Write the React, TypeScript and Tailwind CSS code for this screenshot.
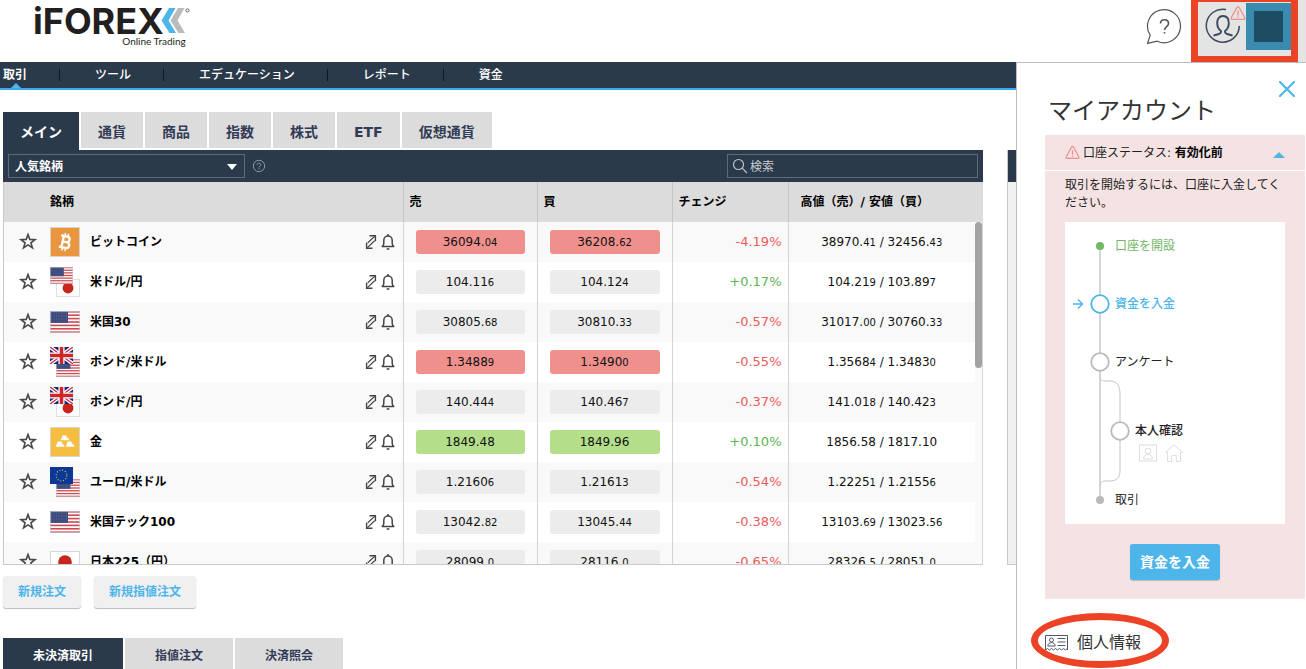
import { Fragment } from "react";
import type { ReactNode } from "react";

type Tone = "down" | "flat" | "up";

type Instrument = {
  name: string;
  icon: ReactNode;
  sell: [string, string];
  buy: [string, string];
  tone: Tone;
  change: string;
  high: [string, string];
  low: [string, string];
};

const toneClass: Record<Tone, string> = {
  down: "bg-[#f0908d]",
  flat: "bg-[#ececec]",
  up: "bg-[#b4de89]",
};

function UsFlag({ className = "" }: { className?: string }) {
  return (
    <svg viewBox="0 0 30 22" preserveAspectRatio="none" className={className}>
      <rect width="30" height="22" fill="#fff" />
      {[0, 1, 2, 3, 4, 5, 6].map((i) => (
        <rect key={i} y={i * 3.4} width="30" height="1.6" fill="#cb4a50" />
      ))}
      <rect width="18" height="12" fill="#3c4a7c" />
      <path
        d="M1 2h16M1 5h16M1 8h16M1 11h16"
        stroke="#6f7ba6"
        strokeWidth="0.8"
        strokeDasharray="1 1.5"
      />
      <rect x="0.5" y="0.5" width="29" height="21" fill="none" stroke="#c9ccd8" strokeOpacity="0.7" />
    </svg>
  );
}

function JpFlag({ className = "" }: { className?: string }) {
  return (
    <svg viewBox="0 0 30 22" className={className}>
      <rect x="0.5" y="0.5" width="29" height="21" fill="#fff" stroke="#d5d7dd" />
      <circle cx="15" cy="11" r="6.8" fill="#c8261c" />
    </svg>
  );
}

function UkFlag({ className = "" }: { className?: string }) {
  return (
    <svg viewBox="0 0 30 22" preserveAspectRatio="none" className={className}>
      <rect width="30" height="22" fill="#16247a" />
      <path d="M0 0l30 22M30 0L0 22" stroke="#fff" strokeWidth="5" />
      <path d="M0 0l30 22M30 0L0 22" stroke="#d0242b" strokeWidth="1.6" />
      <path d="M15 0v22M0 11h30" stroke="#fff" strokeWidth="8" />
      <path d="M15 0v22M0 11h30" stroke="#d0242b" strokeWidth="4.6" />
    </svg>
  );
}

function EuFlag({ className = "" }: { className?: string }) {
  return (
    <svg viewBox="0 0 30 22" preserveAspectRatio="none" className={className}>
      <rect width="30" height="22" fill="#0b3796" />
      <circle
        cx="15"
        cy="11"
        r="7"
        fill="none"
        stroke="#d9c74a"
        strokeWidth="1.4"
        strokeDasharray="1.4 2.265"
      />
    </svg>
  );
}

function PairIcon({ front, back }: { front: ReactNode; back: ReactNode }) {
  return (
    <span className="grid h-[30px] w-[30px]">
      <span className="self-end justify-self-end [grid-area:1/1]">{back}</span>
      <span className="self-start justify-self-start [grid-area:1/1]">{front}</span>
    </span>
  );
}

function BitcoinIcon() {
  return (
    <svg viewBox="0 0 30 30" className="block h-[30px] w-[30px]">
      <rect x="0.5" y="0.5" width="29" height="29" fill="#e9963e" stroke="#dcd3cc" />
      <g fill="none" stroke="#fff" strokeWidth="2.4" transform="rotate(12 15 15)">
        <path d="M10 9.2h6.2a2.7 2.7 0 0 1 0 5.6h-3.8M12.4 14.8h4.4a3 3 0 0 1 0 6H10M12.6 9v12" />
        <path d="M13.6 6v3M16.8 6v3M13.6 21v3M16.8 21v3" strokeWidth="1.5" />
      </g>
    </svg>
  );
}

function GoldIcon() {
  return (
    <svg viewBox="0 0 30 30" className="block h-[30px] w-[30px]">
      <rect x="0.5" y="0.5" width="29" height="29" fill="#f5be41" stroke="#ddd5c4" />
      <g fill="#fff">
        <path d="M12.5 8.5h4l3.2 4.8h-8.9z" />
        <path d="M7.8 14.4h4l3 5.4H5.6z" />
        <path d="M17.6 14.4h4l3.2 5.4h-9z" />
      </g>
      <path d="M16 8.5l1.6 3M11.4 14.5l1.7 3M21.2 14.5l1.8 3" stroke="#f5be41" strokeWidth="0.7" />
    </svg>
  );
}

const usSmall = <UsFlag className="block h-[18px] w-6" />;
const jpSmall = <JpFlag className="block h-[18px] w-6" />;
const ukSmall = <UkFlag className="block h-[17px] w-[23px]" />;
const usLarge = <UsFlag className="block h-[22px] w-[30px]" />;

const instruments: Instrument[] = [
  { name: "ビットコイン", icon: <BitcoinIcon />, sell: ["36094.", "04"], buy: ["36208.", "62"], tone: "down", change: "-4.19%", high: ["38970.", "41"], low: ["32456.", "43"] },
  { name: "米ドル/円", icon: <PairIcon front={<UsFlag className="block h-[17px] w-[23px]" />} back={jpSmall} />, sell: ["104.11", "6"], buy: ["104.12", "4"], tone: "flat", change: "+0.17%", high: ["104.21", "9"], low: ["103.89", "7"] },
  { name: "米国30", icon: usLarge, sell: ["30805.", "68"], buy: ["30810.", "33"], tone: "flat", change: "-0.57%", high: ["31017.", "00"], low: ["30760.", "33"] },
  { name: "ポンド/米ドル", icon: <PairIcon front={ukSmall} back={usSmall} />, sell: ["1.3488", "9"], buy: ["1.3490", "0"], tone: "down", change: "-0.55%", high: ["1.3568", "4"], low: ["1.3483", "0"] },
  { name: "ポンド/円", icon: <PairIcon front={ukSmall} back={jpSmall} />, sell: ["140.44", "4"], buy: ["140.46", "7"], tone: "flat", change: "-0.37%", high: ["141.01", "8"], low: ["140.42", "3"] },
  { name: "金", icon: <GoldIcon />, sell: ["1849.48", ""], buy: ["1849.96", ""], tone: "up", change: "+0.10%", high: ["1856.58", ""], low: ["1817.10", ""] },
  { name: "ユーロ/米ドル", icon: <PairIcon front={<EuFlag className="block h-[17px] w-[23px]" />} back={usSmall} />, sell: ["1.2160", "6"], buy: ["1.2161", "3"], tone: "flat", change: "-0.54%", high: ["1.2225", "1"], low: ["1.2155", "6"] },
  { name: "米国テック100", icon: usLarge, sell: ["13042.", "82"], buy: ["13045.", "44"], tone: "flat", change: "-0.38%", high: ["13103.", "69"], low: ["13023.", "56"] },
  { name: "日本225（円）", icon: <JpFlag className="block h-[22px] w-[30px]" />, sell: ["28099.", "0"], buy: ["28116.", "0"], tone: "flat", change: "-0.65%", high: ["28326.", "5"], low: ["28051.", "0"] },
];

const navItems = ["取引", "ツール", "エデュケーション", "レポート", "資金"];
const categories = ["メイン", "通貨", "商品", "指数", "株式", "ETF", "仮想通貨"];
const positionTabs = ["未決済取引", "指値注文", "決済照会"];

function Price({ value }: { value: [string, string] }) {
  return (
    <>
      {value[0]}
      <span className="text-[10px]">{value[1]}</span>
    </>
  );
}

function StarIcon() {
  return (
    <svg viewBox="0 0 20 20" className="block h-5 w-5" fill="none" stroke="#4a4a4a" strokeWidth="1.6">
      <path d="M10 2.6l1.8 4.8 5.2.2-4.1 3.200 1.500 5.100L10 12.900l-4.400 3 1.500-5.100L3 7.600l5.200-.2z" />
    </svg>
  );
}

function ExpandIcon() {
  return (
    <svg viewBox="0 0 12 16" className="block h-4 w-3" fill="none" stroke="#444" strokeWidth="1.4">
      <path d="M4.500 1.700h5.900v5.500M1.600 8.600v5.700h5.800" />
      <path d="M9.600 2.400L2.800 8.800M9.600 6.800L2.400 13.600" strokeWidth="1.200" />
    </svg>
  );
}

function BellIcon() {
  return (
    <svg viewBox="0 0 14 18" className="block h-[18px] w-3.5" fill="none" stroke="#444" strokeWidth="1.5">
      <path d="M.8 13.6c1.6-.8 2-1.600 2-3.200V7.200a4.200 4.200 0 0 1 8.400 0v3.200c0 1.600.4 2.400 2 3.200z" />
      <path d="M7 1v2M5.600 15.900h2.800" />
    </svg>
  );
}

function WarningIcon({ className = "" }: { className?: string }) {
  return (
    <svg viewBox="0 0 16 16" className={className} fill="none" stroke="#f08d8a" strokeWidth="1.3" strokeLinejoin="round">
      <path d="M7 2.2a1.1 1.1 0 0 1 2 0l5.8 10.6a1 1 0 0 1-.9 1.5H2.1a1 1 0 0 1-.9-1.5z" />
      <path d="M8 5.500v5M8 11.500v1.300" />
    </svg>
  );
}

function Logo() {
  return (
    <a href="#" className="mt-[3px] ml-[33px] flex flex-col text-[#231f20]">
      <span className="flex">
        <span className="font-[Inter,sans-serif] text-[36px] leading-9 font-bold">iFOREX</span>
        <svg viewBox="0 0 30 36" className="-ml-1 h-9 w-[30px]">
          <path d="M9 5h6.500L8.500 17.500 16 30H9.500L1.500 17.500z" fill="#4db5ea" />
          <path d="M18 5h6.500l-7 12.500L25 30h-6.500l-8-12.500z" fill="#b9bbbd" />
          <circle cx="27.500" cy="7.500" r="1.600" fill="none" stroke="#555" strokeWidth="0.9" />
        </svg>
      </span>
      <span className="-mt-1 pr-1 text-right font-[Lato,sans-serif] text-[10px] leading-3">
        Online Trading
      </span>
    </a>
  );
}

function Header() {
  return (
    <header className="flex h-[62px] items-start justify-between">
      <Logo />
      <div className="flex h-full">
        <button type="button" aria-label="ヘルプ" className="mt-2 mr-2 self-start">
          <svg viewBox="0 0 38 38" className="block h-[38px] w-[38px]" fill="none" stroke="#555" strokeWidth="1.2">
            <path d="M5.200 27.200A16.500 16.500 0 1 1 12.200 33.200L2.600 35.400z" />
            <path d="M15.500 15.500c0-5 8-5 8 0 0 3.200-4 3-4 6.500M19.500 24v1.600" strokeWidth="1.600" />
          </svg>
        </button>
        <div className="h-[63px] bg-[#e4e4e4] pr-2">
          <button
            type="button"
            aria-label="マイアカウント"
            className="flex h-[63px] w-[107px] justify-end border-7 border-t-2 border-[#ec4326]"
          >
            <span className="relative flex-1">
              <svg viewBox="0 0 40 40" className="absolute top-1 left-1 h-10 w-10" fill="none" stroke="#3b4a5c" strokeWidth="1.5">
                <path d="M24 3.500A16.500 16.500 0 1 0 37.300 20" />
                <path d="M11.500 29.500c6-1.200 8-2.200 7.500-4.500-2.600-1.800-3.800-4.800-3.800-8 0-4.200 2.200-7 5.800-7s5.800 2.800 5.800 7c0 3.200-1.200 6.200-3.800 8-.5 2.300 1.500 3.300 7.500 4.500" strokeWidth="1.900" />
              </svg>
              <WarningIcon className="absolute top-[3px] right-0 h-4 w-4" />
            </span>
            <span className="mt-px h-[47px] w-[45px] border-8 border-[#3a8bb0] bg-[#1d4c63]" />
          </button>
        </div>
      </div>
    </header>
  );
}

function NavBar() {
  return (
    <nav className="flex h-7 items-center border-b-2 border-[#3fa9e8] bg-[#2b3a4a] pl-[3px] text-xs text-white">
      {navItems.map((item, i) => (
        <Fragment key={item}>
          {i > 0 && <span className="mr-[35px] ml-8 h-3 w-px bg-[#10161d]" />}
          <a
            href="#"
            className={i === 0 ? "relative pt-px leading-[25px] font-bold" : "pt-px leading-[25px] font-medium"}
          >
            {item}
            {i === 0 && (
              <svg viewBox="0 0 10 5" className="absolute bottom-0 left-2 h-[5px] w-2.5">
                <path d="M0 5l5-5 5 5z" fill="#4db5ea" />
              </svg>
            )}
          </a>
        </Fragment>
      ))}
    </nav>
  );
}

function RatesToolbar() {
  return (
    <div className="flex h-8 items-center bg-[#2b3a4a] px-[5px]">
      <div className="relative">
        <select
          aria-label="銘柄グループ"
          className="block h-6 w-[237px] appearance-none border border-[#5d6b79] bg-[#2b3a4a] px-1.5 pt-px text-xs font-bold text-white"
        >
          <option>人気銘柄</option>
        </select>
        <svg viewBox="0 0 10 6" className="pointer-events-none absolute top-[10px] right-2 h-1.5 w-2.5">
          <path d="M0 0h10L5 6z" fill="#fff" />
        </svg>
      </div>
      <button type="button" aria-label="ヘルプ" className="ml-[7px]">
        <svg viewBox="0 0 14 14" className="block h-3.5 w-3.5" fill="none" stroke="#8e98a3">
          <circle cx="7" cy="7" r="5.700" />
          <path d="M5.200 5.800c0-2.200 3.600-2.200 3.600 0 0 1.400-1.800 1.300-1.800 2.700M7 9.200v1.200" />
        </svg>
      </button>
      <label className="ml-auto flex h-6 w-[251px] items-center border border-[#5d6b79] pl-1">
        <svg viewBox="0 0 16 16" className="h-4 w-4" fill="none" stroke="#c5cbd1" strokeWidth="1.100">
          <circle cx="6.500" cy="6.500" r="5" />
          <path d="M10.200 10.200L15 15" />
        </svg>
        <input
          type="text"
          aria-label="検索"
          placeholder="検索"
          className="ml-0.5 min-w-0 flex-1 bg-transparent pt-0.5 text-xs text-white outline-none placeholder:text-[#c5cbd1]"
        />
      </label>
    </div>
  );
}

function RatesTable() {
  return (
    <div className="relative h-[383px] overflow-hidden border-b border-l border-[#c9c9c9]">
      <table className="w-full table-fixed border-collapse text-xs">
        <colgroup>
          <col />
          <col className="w-[134px]" />
          <col className="w-[135px]" />
          <col className="w-[116px]" />
          <col className="w-[195px]" />
        </colgroup>
        <thead>
          <tr className="h-10 bg-[#dcdcdc] text-left text-black">
            <th className="pl-[46px]">銘柄</th>
            <th className="border-l border-[#c4c4c4] pl-1.5">売</th>
            <th className="border-l border-[#c4c4c4] pl-1.5">買</th>
            <th className="border-l border-[#c4c4c4] pl-1.5">チェンジ</th>
            <th className="border-l border-[#c4c4c4] pl-3">高値（売）/ 安値（買）</th>
          </tr>
        </thead>
        <tbody>
          {instruments.map((row) => (
            <tr key={row.name} className="h-10 odd:bg-[#f9f9f9]">
              <td className="p-0">
                <div className="flex items-center pl-3.5">
                  <button type="button" aria-label="お気に入り">
                    <StarIcon />
                  </button>
                  <span className="ml-3 w-[30px]">{row.icon}</span>
                  <span className="ml-2.5 font-bold text-black">{row.name}</span>
                  <button type="button" aria-label="チャート" className="ml-auto">
                    <ExpandIcon />
                  </button>
                  <button type="button" aria-label="アラート" className="mr-2 ml-1">
                    <BellIcon />
                  </button>
                </div>
              </td>
              {[row.sell, row.buy].map((price, i) => (
                <td key={i} className="border-l border-[#d4d4d4] px-3 py-0">
                  <button
                    type="button"
                    className={`block h-6 w-full rounded-[3px] text-center leading-6 text-[#111] ${toneClass[row.tone]}`}
                  >
                    <Price value={price} />
                  </button>
                </td>
              ))}
              <td
                className={`border-l border-[#d4d4d4] pr-1.5 text-right text-[13px] ${
                  row.change.startsWith("+") ? "text-[#5db450]" : "text-[#ec5b5b]"
                }`}
              >
                {row.change}
              </td>
              <td className="border-l border-[#d4d4d4] pr-2 text-center text-[#111]">
                <Price value={row.high} /> / <Price value={row.low} />
              </td>
            </tr>
          ))}
        </tbody>
      </table>
      <div className="absolute top-10 right-0 bottom-0 w-2 border-r border-[#d4d4d4] bg-[#fafafa]">
        <div className="h-[146px] rounded-full bg-[#a3a3a3]" />
      </div>
    </div>
  );
}

function TradingArea() {
  return (
    <main className="flex min-w-0 flex-1 flex-col">
      <NavBar />
      <div className="mt-[22px] flex gap-6 pl-[3px]">
        <div className="min-w-0 flex-1">
          <div role="tablist" className="flex h-[38px] items-start gap-0.5">
            {categories.map((name, i) => (
              <button
                key={name}
                type="button"
                role="tab"
                aria-selected={i === 0}
                className={
                  i === 0
                    ? "h-[38px] bg-[#2b3a4a] px-[17px] pt-0.5 text-sm font-bold text-white"
                    : "h-9 bg-[#dcdcdc] px-[17px] pt-1 text-sm font-bold text-[#323b55]"
                }
              >
                {name}
              </button>
            ))}
          </div>
          <RatesToolbar />
          <RatesTable />
        </div>
        <div className="mt-[38px] flex w-[9px] flex-col border-b border-l border-[#c9c9c9] bg-[#f0f0f0]">
          <div className="h-8 bg-[#2b3a4a]" />
        </div>
      </div>
      <div className="mt-[11px] flex gap-[13px] pl-[3px]">
        {["新規注文", "新規指値注文"].map((label) => (
          <button
            key={label}
            type="button"
            className="h-8 rounded-[3px] bg-[#f0f0f0] px-[15px] text-xs font-bold text-[#4db5ea] shadow-[0_1px_1px_#bbb]"
          >
            {label}
          </button>
        ))}
      </div>
      <div role="tablist" className="mt-[30px] flex gap-0.5 pl-[3px]">
        {positionTabs.map((label, i) => (
          <button
            key={label}
            type="button"
            role="tab"
            aria-selected={i === 0}
            className={
              i === 0
                ? "h-9 bg-[#2b3a4a] px-[30px] text-xs font-bold text-white"
                : "h-9 bg-[#dcdcdc] px-[30px] text-xs font-bold text-[#323b55]"
            }
          >
            {label}
          </button>
        ))}
      </div>
    </main>
  );
}

function AccountSteps() {
  return (
    <div className="mt-[11px] grid bg-white text-xs leading-[18px] text-[#222]">
      <svg viewBox="0 0 70 302" className="h-[302px] w-[70px] [grid-area:1/1]" fill="none">
        <path d="M35 28v45M35 91v40M35 149v125" stroke="#c9c9c9" strokeWidth="1.500" />
        <path d="M35 155c0 3 2 4 6 4h4c7 0 10 5 10 13v28M55 218v31c0 7-4 10-10 10h-4c-4 0-6 1-6 5" stroke="#c4c4c4" />
        <circle cx="35" cy="24" r="4" fill="#72b764" />
        <circle cx="35" cy="82" r="8.800" fill="#fff" stroke="#4db5ea" strokeWidth="1.800" />
        <circle cx="35" cy="140" r="8.800" fill="#fff" stroke="#b9b9b9" strokeWidth="1.800" />
        <circle cx="55" cy="209" r="8.800" fill="#fff" stroke="#b9b9b9" strokeWidth="1.800" />
        <circle cx="35" cy="278" r="4" fill="#b9b9b9" />
        <path d="M8 82h9M13 77.500l4.500 4.500-4.500 4.500" stroke="#4db5ea" strokeWidth="1.300" />
      </svg>
      <ol className="py-[15px] pl-[50px] [grid-area:1/1]">
        <li className="text-[#72b764]">口座を開設</li>
        <li className="mt-10 font-medium text-[#4db5ea]">資金を入金</li>
        <li className="mt-10">アンケート</li>
        <li className="mt-[51px] pl-5 font-medium">
          本人確認
          <span className="mt-1 flex gap-2 pl-1">
            <svg viewBox="0 0 18 18" className="h-[18px] w-[18px]" fill="none" stroke="#dedede">
              <rect x="0.500" y="1" width="17" height="16" />
              <circle cx="9" cy="7" r="2.800" />
              <path d="M4.500 15c0-6 9-6 9 0z" />
            </svg>
            <svg viewBox="0 0 18 18" className="h-[18px] w-[18px]" fill="none" stroke="#dedede">
              <path d="M.5 8.500L9 .8l8.500 7.700H15.500v9h-4.200v-6H6.700v6H2.500v-9z" />
            </svg>
          </span>
        </li>
        <li className="mt-[29px]">取引</li>
      </ol>
    </div>
  );
}

function AccountPanel() {
  return (
    <aside className="w-[290px] shrink-0 border-t border-l border-[#bdbdbd] bg-white pr-px pl-7">
      <div className="flex h-[72px] items-start justify-between pt-[18px] pr-2.5">
        <h1 className="mt-3 ml-[3px] text-2xl leading-9 text-[#333]">マイアカウント</h1>
        <button type="button" aria-label="閉じる">
          <svg viewBox="0 0 16 16" className="block h-4 w-4" stroke="#4db5ea" strokeWidth="2.200" strokeLinecap="round">
            <path d="M1 1l14 14M15 1L1 15" />
          </svg>
        </button>
      </div>
      <section className="bg-[#f5e3e4]">
        <button
          type="button"
          aria-expanded="true"
          className="flex h-9 w-full items-center border-b border-white px-5 text-xs text-[#222]"
        >
          <WarningIcon className="h-[15px] w-[15px]" />
          <span className="ml-[3px]">
            口座ステータス: <b className="text-black">有効化前</b>
          </span>
          <svg viewBox="0 0 12 6" className="mt-1 ml-auto h-1.5 w-3">
            <path d="M0 6l6-6 6 6z" fill="#4db5ea" />
          </svg>
        </button>
        <div className="px-5 pt-[5px] pb-[19px]">
          <p className="-mb-px text-xs leading-[18px] text-[#222]">
            取引を開始するには、口座に入金してください。
          </p>
          <AccountSteps />
          <button
            type="button"
            className="mx-auto mt-5 block h-9 rounded-[3px] bg-[#4db5ea] px-2.5 text-sm font-bold text-white shadow-[0_1px_1px_#bbb]"
          >
            資金を入金
          </button>
        </div>
      </section>
      <a href="#" className="relative mt-8 flex items-center text-base leading-6 text-[#333]">
        <svg viewBox="0 0 24 18" className="mr-2 h-[18px] w-6" fill="none" stroke="#4c586b">
          <path d="M.5 16V1.500h22V16M.5 16l2-1.500 2 1.500 2-1.500 2 1.500 2-1.500 2 1.500 2-1.500 2 1.500 2-1.500 2 1.500 2-1.500" />
          <circle cx="6.500" cy="6" r="2" />
          <path d="M2.800 12c0-4.500 7.400-4.500 7.400 0zM12.500 4.500h8M12.500 8h8M12.500 11.500h8" />
        </svg>
        個人情報
        <span className="absolute -top-[18px] -left-3.5 h-[55px] w-[138px] rounded-[50%] border-7 border-[#ec4326]" />
      </a>
    </aside>
  );
}

export default function App() {
  return (
    <div className="flex h-screen flex-col overflow-hidden bg-white font-['DejaVu_Sans','Noto_Sans_CJK_JP',sans-serif]">
      <Header />
      <div className="flex flex-1 items-stretch">
        <TradingArea />
        <AccountPanel />
      </div>
    </div>
  );
}
